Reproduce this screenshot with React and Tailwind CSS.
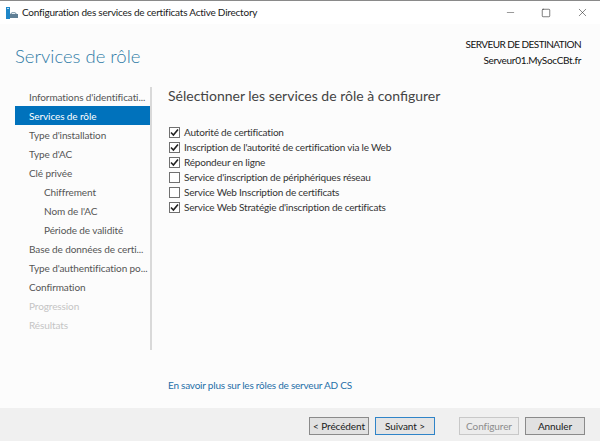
import React from 'react';
import { Minus, Square, X } from 'lucide-react';

const steps = [
    { label: "Informations d'identificati...", state: 'normal' },
    { label: 'Services de rôle', state: 'active' },
    { label: "Type d'installation", state: 'normal' },
    { label: "Type d'AC", state: 'normal' },
    { label: 'Clé privée', state: 'normal' },
    { label: 'Chiffrement', state: 'normal', sub: true },
    { label: "Nom de l'AC", state: 'normal', sub: true },
    { label: 'Période de validité', state: 'normal', sub: true },
    { label: 'Base de données de certi...', state: 'normal' },
    { label: "Type d'authentification po...", state: 'normal' },
    { label: 'Confirmation', state: 'normal' },
    { label: 'Progression', state: 'disabled' },
    { label: 'Résultats', state: 'disabled' },
];

const services = [
    { label: 'Autorité de certification', checked: true },
    { label: "Inscription de l'autorité de certification via le Web", checked: true },
    { label: 'Répondeur en ligne', checked: true },
    { label: "Service d'inscription de périphériques réseau", checked: false },
    { label: 'Service Web Inscription de certificats', checked: false },
    { label: "Service Web Stratégie d'inscription de certificats", checked: true },
];

function AppIcon() {
    return (
        <svg width="12" height="12" viewBox="0 0 12 12" className="shrink-0">
            <rect x="0" y="0" width="4" height="12" fill="#1e86c8" />
            <rect x="1" y="1" width="2" height="1" fill="#bfe0f5" />
            <path d="M4 7 L6 5 H9 L11 7 V11 H4 Z" fill="#8fa6b5" />
            <rect x="4" y="7" width="8" height="4" fill="#5f7f95" />
            <rect x="6" y="6" width="3" height="1" fill="#e4edf3" />
        </svg>
    );
}

function Checkbox({ checked }) {
    return (
        <span className="w-[11px] h-[11px] border border-[#707070] bg-white flex items-center justify-center shrink-0">
            {checked && (
                <svg width="9" height="9" viewBox="0 0 9 9">
                    <path d="M1 4.5 L3.4 7 L8 1.4" fill="none" stroke="#222222" strokeWidth="1.6" />
                </svg>
            )}
        </span>
    );
}

function FooterButton({ children, variant }) {
    const styles = {
        normal: 'border-[#8a8a8a] bg-[#e1e1e1] text-[#1a1a1a]',
        focus: 'border-[#2f84c8] bg-[#e4e4e4] text-[#1a1a1a]',
        disabled: 'border-[#c8c8c8] bg-[#ececec] text-[#8d8d8d]',
    };
    return (
        <button className={`w-[60px] h-[18px] border text-[10px] tracking-[-0.1px] leading-none flex items-center justify-center ${styles[variant]}`}>
            {children}
        </button>
    );
}

export default function App() {
    return (
        <div className="w-[600px] h-[441px] flex flex-col overflow-hidden bg-[#fcfcfc] text-[#333333] font-['Lato',sans-serif]">
            <div className="h-px bg-[#8a8a8a]" />

            <div className="h-[23px] bg-white flex items-center pl-[6px] shrink-0">
                <AppIcon />
                <span className="ml-[4px] text-[10px] tracking-[-0.23px] text-[#1a1a1a] whitespace-nowrap">
                    Configuration des services de certificats Active Directory
                </span>
                <div className="ml-auto flex items-center text-[#222222]">
                    <span className="w-[36px] flex justify-center"><Minus size={11} strokeWidth={1} /></span>
                    <span className="w-[36px] flex justify-center"><Square size={10} strokeWidth={1.4} /></span>
                    <span className="w-[36px] flex justify-center"><X size={13} strokeWidth={1} /></span>
                </div>
            </div>

            <div className="flex-1 flex flex-col min-h-0">
                <div className="h-[63px] shrink-0 flex justify-between pl-[15px] pr-[19px]">
                    <h1 className="mt-[20px] text-[18.5px] leading-[24px] font-light text-[#2f7ba6]">Services de rôle</h1>
                    <div className="mt-[12px] text-right text-[10px] leading-[16px] text-[#111111]">
                        <div className="tracking-[-0.55px]">SERVEUR DE DESTINATION</div>
                        <div className="tracking-[-0.3px]">Serveur01.MySocCBt.fr</div>
                    </div>
                </div>

                <div className="flex-1 flex min-h-0">
                    <nav className="w-[137px] ml-[15px] h-[263px] border-r-2 border-[#d9d9d9] shrink-0">
                        {steps.map((step) => (
                            <div
                                key={step.label}
                                className={`h-[19px] pt-[2px] flex items-center text-[10px] tracking-[-0.1px] whitespace-nowrap ${step.sub ? 'pl-[29px]' : 'pl-[14px]'} ${
                                    step.state === 'active'
                                        ? 'bg-[#0072bc] text-white'
                                        : step.state === 'disabled'
                                            ? 'text-[#c4c4c4]'
                                            : 'text-[#555555]'
                                }`}
                            >
                                {step.label}
                            </div>
                        ))}
                    </nav>

                    <main className="flex-1 flex flex-col pl-[16px] pb-[16px]">
                        <h2 className="-mt-px text-[14px] leading-[20px] text-[#444444] font-normal">
                            Sélectionner les services de rôle à configurer
                        </h2>
                        <div className="mt-[19px] ml-px flex flex-col">
                            {services.map((service) => (
                                <label key={service.label} className="h-[15px] flex items-center gap-[4px] text-[10px] tracking-[-0.2px] text-[#333333] whitespace-nowrap">
                                    <Checkbox checked={service.checked} />
                                    {service.label}
                                </label>
                            ))}
                        </div>
                        <a className="mt-auto text-[10px] tracking-[-0.22px] leading-[14px] text-[#1f6fa8]">
                            En savoir plus sur les rôles de serveur AD CS
                        </a>
                    </main>
                </div>
            </div>

            <div className="h-[33px] bg-[#f0f0f0] shrink-0 flex items-center pl-[309px] pt-[3px]">
                <FooterButton variant="normal">&lt; Précédent</FooterButton>
                <div className="ml-[6px]"><FooterButton variant="focus">Suivant &gt;</FooterButton></div>
                <div className="ml-[24px]"><FooterButton variant="disabled">Configurer</FooterButton></div>
                <div className="ml-[6px]"><FooterButton variant="normal">Annuler</FooterButton></div>
            </div>
        </div>
    );
}
